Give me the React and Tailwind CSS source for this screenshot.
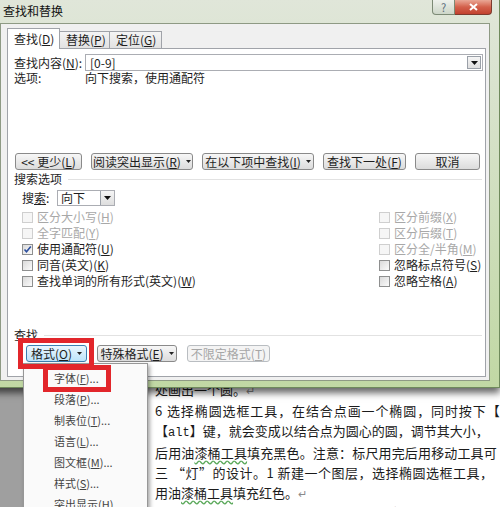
import React from 'react';

const leftOpts = [
  { label: '区分大小写', key: 'H', disabled: true },
  { label: '全字匹配', key: 'Y', disabled: true },
  { label: '使用通配符', key: 'U', checked: true },
  { label: '同音(英文)', key: 'K' },
  { label: '查找单词的所有形式(英文)', key: 'W' },
];

const rightOpts = [
  { label: '区分前缀', key: 'X', disabled: true },
  { label: '区分后缀', key: 'T', disabled: true },
  { label: '区分全/半角', key: 'M', disabled: true },
  { label: '忽略标点符号', key: 'S' },
  { label: '忽略空格', key: 'A' },
];

const menuItems = [
  ['字体', 'F', '...'],
  ['段落', 'P', '...'],
  ['制表位', 'T', '...'],
  ['语言', 'L', '...'],
  ['图文框', 'M', '...'],
  ['样式', 'S', '...'],
  ['突出显示', 'H', ''],
];

function Key({ k }) {
  return (
    <span>
      (<span className="underline underline-offset-1">{k}</span>)
    </span>
  );
}

function Caret() {
  return (
    <svg width="5" height="3" viewBox="0 0 5 3" className="ml-[5px] shrink-0">
      <path d="M0 0h5L2.5 3z" fill="#222" />
    </svg>
  );
}

function DropBox({ className }) {
  return (
    <span className={`flex items-center justify-center border border-[#9aa0a8] bg-linear-to-b from-[#f5f5f5] to-[#dedede] ${className}`}>
      <svg width="7" height="4" viewBox="0 0 7 4">
        <path d="M0 0h7L3.5 4z" fill="#111" />
      </svg>
    </span>
  );
}

function Btn({ children, className, caret, disabled, active }) {
  const look = disabled
    ? 'border-[#b9bdc1] bg-[#f4f4f4] text-[#a6a6a6]'
    : active
      ? 'border-[#3c7fb1] bg-linear-to-b from-[#eaf6fd] to-[#bde4fb] text-[#1e1e1e]'
      : 'border-[#8a8a8a] bg-linear-to-b from-[#f7f7f7] to-[#dcdcdc] text-[#1e1e1e]';
  return (
    <div className={`flex h-[17px] shrink-0 items-center justify-center rounded-[3px] border text-[12px] leading-none ${look} ${className}`}>
      {children}
      {caret && <Caret />}
    </div>
  );
}

function Check({ checked, disabled }) {
  return (
    <span
      className={`flex h-[11px] w-[11px] shrink-0 items-center justify-center border ${
        disabled ? 'border-[#cfcfcf] bg-[#f6f6f6]' : 'border-[#8e8f8f] bg-linear-to-br from-[#dadada] to-[#fbfbfb]'
      }`}
    >
      {checked && (
        <svg width="9" height="9" viewBox="0 0 9 9">
          <path d="M1.5 4.5l2 2.2L7.8 1.6" fill="none" stroke="#2c4f9e" strokeWidth="1.6" />
        </svg>
      )}
    </span>
  );
}

function OptRow({ opt }) {
  return (
    <div className={`flex h-[16px] items-center gap-[4px] text-[12px] ${opt.disabled ? 'text-[#a8a8a8]' : 'text-[#1e1e1e]'}`}>
      <Check checked={opt.checked} disabled={opt.disabled} />
      <span>
        {opt.label}
        <Key k={opt.key} />
      </span>
    </div>
  );
}

export default function App() {
  return (
    <div className="relative h-[507px] w-[500px] overflow-hidden bg-[#a3a3a3] font-['Noto_Sans_CJK_SC','Liberation_Sans',sans-serif]">
      {/* word document behind the dialog */}
      <div className="flex h-full">
        <div className="w-[148px] shrink-0 bg-[#9f9f9f]" />
        <div className="flex-1 overflow-hidden whitespace-nowrap bg-white pl-[7px] pt-[380px] text-[13px] leading-[20px] text-[#1b1b1b]">
          <div>处画出一个圆。<span className="text-[11px] text-[#8a8a8a]">↵</span></div>
          <div className="mt-[1px] tracking-[0.9px]">6 选择椭圆选框工具，在结合点画一个椭圆，同时按下【s</div>
          <div>
            【<span className="font-['Liberation_Mono',monospace] text-[12px]">alt</span>】键，就会变成以结合点为圆心的圆，调节其大小，
          </div>
          <div className="tracking-[0.15px]">
            后用油<span className="underline decoration-wavy decoration-[#5aa85a] underline-offset-2">漆桶工具</span>填充黑色。注意：标尺用完后用移动工具可
          </div>
          <div className="tracking-[0.5px]">三 “灯”的设计。1 新建一个图层，选择椭圆选框工具，</div>
          <div>
            用油<span className="underline decoration-wavy decoration-[#5aa85a] underline-offset-2">漆桶工具</span>填充红色。<span className="text-[11px] text-[#8a8a8a]">↵</span>
          </div>
          <div>　在图层，从顶部到底部拉出一个线性渐变</div>
        </div>
      </div>

      {/* find and replace dialog */}
      <div className="absolute left-[-10px] top-0 flex h-[388px] w-[510px] flex-col border border-t-0 border-[#6f8a5c] bg-linear-to-b from-[#e0e6d9] via-[#d0dfbf] to-[#c1d8a4] shadow-[0_5px_7px_rgba(0,0,0,0.6)]">
        <div className="flex h-[23px] shrink-0 items-start">
          <span className="pl-[12px] pt-[4px] text-[12px] leading-[14px] text-[#111]">查找和替换</span>
          <div className="ml-auto mr-[7px] flex">
            <div className="flex h-[15px] w-[23px] items-center justify-center rounded-bl-[4px] border border-t-0 border-[#7c8a75] bg-linear-to-b from-[#eef1ec] to-[#cdd6c8] text-[11px] leading-none text-[#5a6b7a]">
              ?
            </div>
            <div className="flex h-[15px] w-[37px] items-center justify-center rounded-br-[4px] border border-t-0 border-l-0 border-[#7d3a2e] bg-linear-to-b from-[#e9a796] via-[#d3604b] to-[#c2412f]">
              <svg width="9" height="8" viewBox="0 0 9 8">
                <path d="M1 1l7 6M8 1L1 7" stroke="#fff" strokeWidth="2" />
              </svg>
            </div>
          </div>
        </div>

        <div className="mx-[9px] mb-[6px] flex flex-1 flex-col border border-[#8e9a84] bg-[#f0f0f0] pb-[3px] pl-[6px] pr-[3px] pt-[4px]">
          {/* tabs */}
          <div className="flex h-[20px] shrink-0 items-end text-[12px] leading-none text-[#1e1e1e]">
            <div className="relative z-10 -mb-px flex h-[21px] w-[53px] items-center border border-b-0 border-[#a0a3a9] bg-white pl-[6px]">
              查找<Key k="D" />
            </div>
            <div className="flex h-[17px] w-[50px] items-center border border-b-0 border-l-0 border-[#a0a3a9] bg-linear-to-b from-[#f4f4f4] to-[#e2e2e2] pl-[6px]">
              替换<Key k="P" />
            </div>
            <div className="flex h-[17px] w-[52px] items-center border border-b-0 border-l-0 border-[#a0a3a9] bg-linear-to-b from-[#f4f4f4] to-[#e2e2e2] pl-[6px]">
              定位<Key k="G" />
            </div>
          </div>

          {/* tab page */}
          <div className="flex flex-1 flex-col border border-[#a0a3a9] bg-white pl-[6px] pr-[2px] text-[12px] leading-none text-[#1e1e1e]">
            <div className="mt-[5px] flex h-[17px] items-center">
              <span className="w-[71px] shrink-0">
                查找内容<Key k="N" />:
              </span>
              <div className="flex h-[17px] flex-1 items-center border border-[#abadb3] pl-[4px] pr-[1px]">
                <span>[0-9]</span>
                <DropBox className="ml-auto h-[13px] w-[14px]" />
              </div>
            </div>
            <div className="flex h-[14px] items-center">
              <span className="w-[71px] shrink-0">选项:</span>
              <span>向下搜索，使用通配符</span>
            </div>

            <div className="mt-[68px] flex gap-[9px] pl-[1px]">
              <Btn className="w-[67px]">
                &lt;&lt; 更少<Key k="L" />
              </Btn>
              <Btn className="w-[102px]" caret>
                阅读突出显示<Key k="R" />
              </Btn>
              <Btn className="w-[112px]" caret>
                在以下项中查找<Key k="I" />
              </Btn>
              <Btn className="w-[83px]">
                查找下一处<Key k="F" />
              </Btn>
              <Btn className="w-[65px]">取消</Btn>
            </div>

            <div className="mt-[1px] flex h-[16px] items-center pr-[1px]">
              <span>搜索选项</span>
              <span className="ml-[6px] h-px flex-1 bg-[#e2e2e2]" />
            </div>

            <div className="mt-[3px] flex h-[16px] items-center pl-[8px]">
              <span className="w-[35px] shrink-0">
                搜<span className="underline underline-offset-1">索</span>:
              </span>
              <div className="flex h-[16px] w-[58px] items-center border border-[#abadb3] pl-[3px]">
                <span>向下</span>
                <DropBox className="ml-auto h-[14px] w-[14px] border-y-0 border-r-0" />
              </div>
            </div>

            <div className="mt-[3px] flex pl-[8px]">
              <div className="flex w-[357px] shrink-0 flex-col">
                {leftOpts.map(o => (
                  <OptRow key={o.key} opt={o} />
                ))}
              </div>
              <div className="flex flex-col">
                {rightOpts.map(o => (
                  <OptRow key={o.key} opt={o} />
                ))}
              </div>
            </div>

            <div className="mt-[38px] flex h-[16px] items-center pr-[1px]">
              <span>查找</span>
              <span className="ml-[6px] h-px flex-1 bg-[#e2e2e2]" />
            </div>

            <div className="mt-[2px] flex gap-[10px] pl-[12px]">
              <Btn className="w-[61px]" caret active>
                格式<Key k="O" />
              </Btn>
              <Btn className="w-[80px]" caret>
                特殊格式<Key k="E" />
              </Btn>
              <Btn className="w-[83px]" disabled>
                不限定格式<Key k="T" />
              </Btn>
            </div>
          </div>
        </div>
      </div>

      {/* format dropdown menu */}
      <div className="absolute left-[23px] top-[363px] h-[160px] w-[125px] border border-[#979797] bg-[#fafafa] pt-[4px] shadow-[2px_2px_4px_rgba(0,0,0,0.35)]">
        {menuItems.map(([label, k, dots]) => (
          <div key={k} className="flex h-[21px] items-center pl-[30px] text-[11px] leading-none text-[#444]">
            {label}
            <Key k={k} />
            {dots}
          </div>
        ))}
      </div>

      {/* red highlight boxes */}
      <div className="absolute left-[18px] top-[338px] h-[31px] w-[76px] border-[5px] border-[#e2262b]" />
      <div className="absolute left-[43px] top-[365px] h-[27px] w-[68px] border-[5px] border-[#e2262b]" />
    </div>
  );
}
